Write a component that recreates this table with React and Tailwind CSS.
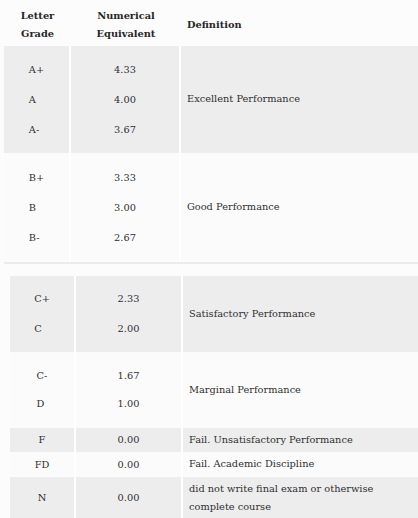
import React from "react";

const font = "font-['DejaVu_Serif','Liberation_Serif',serif]";

const Stack = ({ items, gap = "leading-[30px]" }) => (
  <div className={`flex flex-col ${gap}`}>
    {items.map((t) => (
      <span key={t}>{t}</span>
    ))}
  </div>
);

const Group = ({ grades, nums, def, bg, h, cols, gap }) => (
  <div className={`flex ${bg} ${h}`}>
    <div className={`${cols[0]} flex items-center justify-center border-r-2 border-white`}>
      <Stack items={grades} gap={gap} />
    </div>
    <div className={`${cols[1]} flex items-center justify-center border-r-2 border-white`}>
      <Stack items={nums} gap={gap} />
    </div>
    <div className="flex-1 flex items-center pl-[6px]">{def}</div>
  </div>
);

const t1 = ["w-[67px]", "w-[110px]"];
const t2 = ["w-[66px]", "w-[107px]"];

export default function App() {
  return (
    <div className={`w-[418px] h-[518px] overflow-hidden bg-[#fcfcfc] text-[#2f2f2f] text-[9.8px] ${font}`}>
      <div className="ml-[4px]">
        <div className="flex h-[46px] pt-[3px] font-bold leading-[18px] text-[#262626]">
          <div className="w-[67px] flex flex-col items-center justify-center text-center">
            <span>Letter</span>
            <span>Grade</span>
          </div>
          <div className="w-[110px] flex flex-col items-center justify-center text-center">
            <span>Numerical</span>
            <span>Equivalent</span>
          </div>
          <div className="flex-1 flex items-center pl-[6px]">Definition</div>
        </div>
        <Group
          grades={["A+", "A", "A-"]}
          nums={["4.33", "4.00", "3.67"]}
          def="Excellent Performance"
          bg="bg-[#ededee]"
          h="h-[107px]"
          cols={t1}
        />
        <Group
          grades={["B+", "B", "B-"]}
          nums={["3.33", "3.00", "2.67"]}
          def="Good Performance"
          bg="bg-[#fbfbfb]"
          h="h-[109px]"
          cols={t1}
        />
        <div className="h-[2px] bg-[#ececec]" />
      </div>

      <div className="ml-[10px] mt-[12px]">
        <Group
          grades={["C+", "C"]}
          nums={["2.33", "2.00"]}
          def="Satisfactory Performance"
          bg="bg-[#ededee]"
          h="h-[76px]"
          cols={t2}
        />
        <Group
          grades={["C-", "D"]}
          nums={["1.67", "1.00"]}
          def="Marginal Performance"
          bg="bg-[#fbfbfb]"
          h="h-[76px]"
          cols={t2}
          gap="leading-[28px]"
        />
        <Group
          grades={["F"]}
          nums={["0.00"]}
          def="Fail. Unsatisfactory Performance"
          bg="bg-[#ededee]"
          h="h-[24px]"
          cols={t2}
        />
        <Group
          grades={["FD"]}
          nums={["0.00"]}
          def="Fail. Academic Discipline"
          bg="bg-[#fbfbfb]"
          h="h-[25px]"
          cols={t2}
        />
        <Group
          grades={["N"]}
          nums={["0.00"]}
          def={
            <div className="leading-[18px]">
              did not write final exam or otherwise
              <br />
              complete course
            </div>
          }
          bg="bg-[#ededee]"
          h="h-[42px]"
          cols={t2}
        />
      </div>
    </div>
  );
}
